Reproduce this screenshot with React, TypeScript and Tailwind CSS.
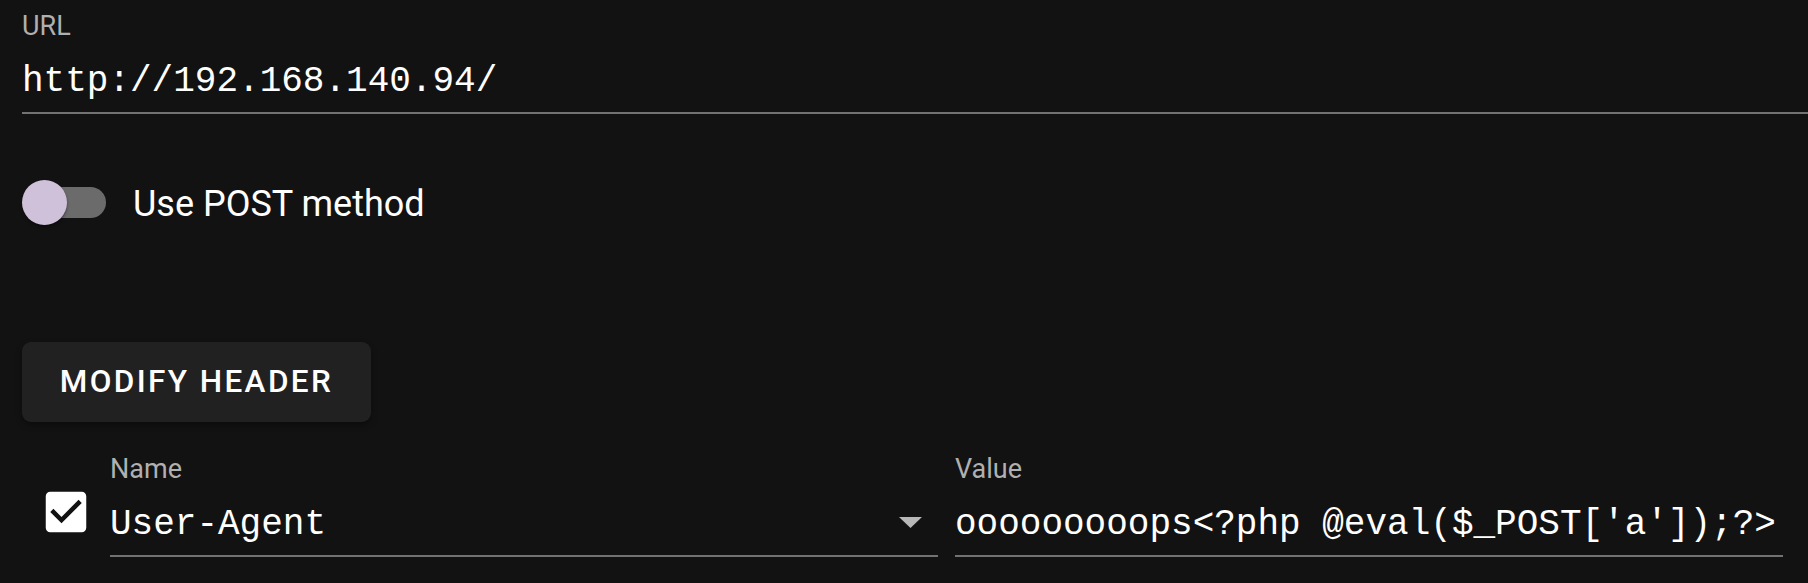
export default function App() {
  return (
    <div className="h-[583px] w-[1808px] overflow-hidden bg-[#121212] pl-[22px] text-white" style={{ fontFamily: "Roboto, 'Noto Sans', sans-serif" }}>
      {/* URL field */}
      <div className="pt-[13px]">
        <div className="text-[27px] leading-[27px] text-[#b0b0b0]">URL</div>
        <div className="mt-[24px] border-b-2 border-[#727272] pb-[12px]">
          <div className="h-[36px] text-[36px] leading-[36px] font-['Liberation_Mono',monospace]">http://192.168.140.94/</div>
        </div>
      </div>

      {/* POST switch */}
      <div className="mt-[66px] flex h-[45px] items-center">
        <div className="relative h-[45px] w-[84px] shrink-0">
          <div className="absolute left-[7px] top-[7px] h-[31px] w-[77px] rounded-full bg-[#6b6b6b]" />
          <div className="absolute left-0 top-0 h-[45px] w-[45px] rounded-full bg-[#d0c1da] shadow-[0_2px_3px_rgba(0,0,0,0.4)]" />
        </div>
        <span className="ml-[27px] mt-[3px] text-[36px] leading-[45px]">Use POST method</span>
      </div>

      {/* Modify header button */}
      <button className="mt-[117px] flex h-[80px] w-[349px] items-center justify-center rounded-[9px] bg-[#212121] text-[31.5px] font-medium uppercase tracking-[2.4px] text-white shadow-[0_3px_6px_rgba(0,0,0,0.35)]">
        Modify header
      </button>

      {/* Header row */}
      <div className="mt-[34px] flex items-start">
        <svg viewBox="0 0 24 24" className="mt-[29px] ml-[17px] h-[54px] w-[54px] shrink-0 fill-white">
          <path d="M19 3H5c-1.11 0-2 .9-2 2v14c0 1.1.89 2 2 2h14c1.11 0 2-.9 2-2V5c0-1.1-.89-2-2-2zm-9 14l-5-5 1.41-1.410L10 14.17l7.59-7.59L19 8l-9 9z" />
        </svg>
        <div className="ml-[17px] w-[828px]">
          <div className="text-[27px] leading-[27px] text-[#b0b0b0]">Name</div>
          <div className="mt-[24px] flex items-center justify-between border-b-2 border-[#727272] pb-[12px] pr-[16px]">
            <div className="h-[36px] text-[36px] leading-[36px] font-['Liberation_Mono',monospace]">User-Agent</div>
            <svg viewBox="0 0 23 11" className="-mt-[6px] h-[11px] w-[23px] fill-[#b8b8b8]">
              <path d="M0 0h23L11.5 11z" />
            </svg>
          </div>
        </div>
        <div className="ml-[17px] w-[828px]">
          <div className="text-[27px] leading-[27px] text-[#b0b0b0]">Value</div>
          <div className="mt-[24px] border-b-2 border-[#727272] pb-[12px]">
            <div className="h-[36px] text-[36px] leading-[36px] font-['Liberation_Mono',monospace]">ooooooooops&lt;?php @eval($_POST['a']);?&gt;</div>
          </div>
        </div>
      </div>
    </div>
  );
}
